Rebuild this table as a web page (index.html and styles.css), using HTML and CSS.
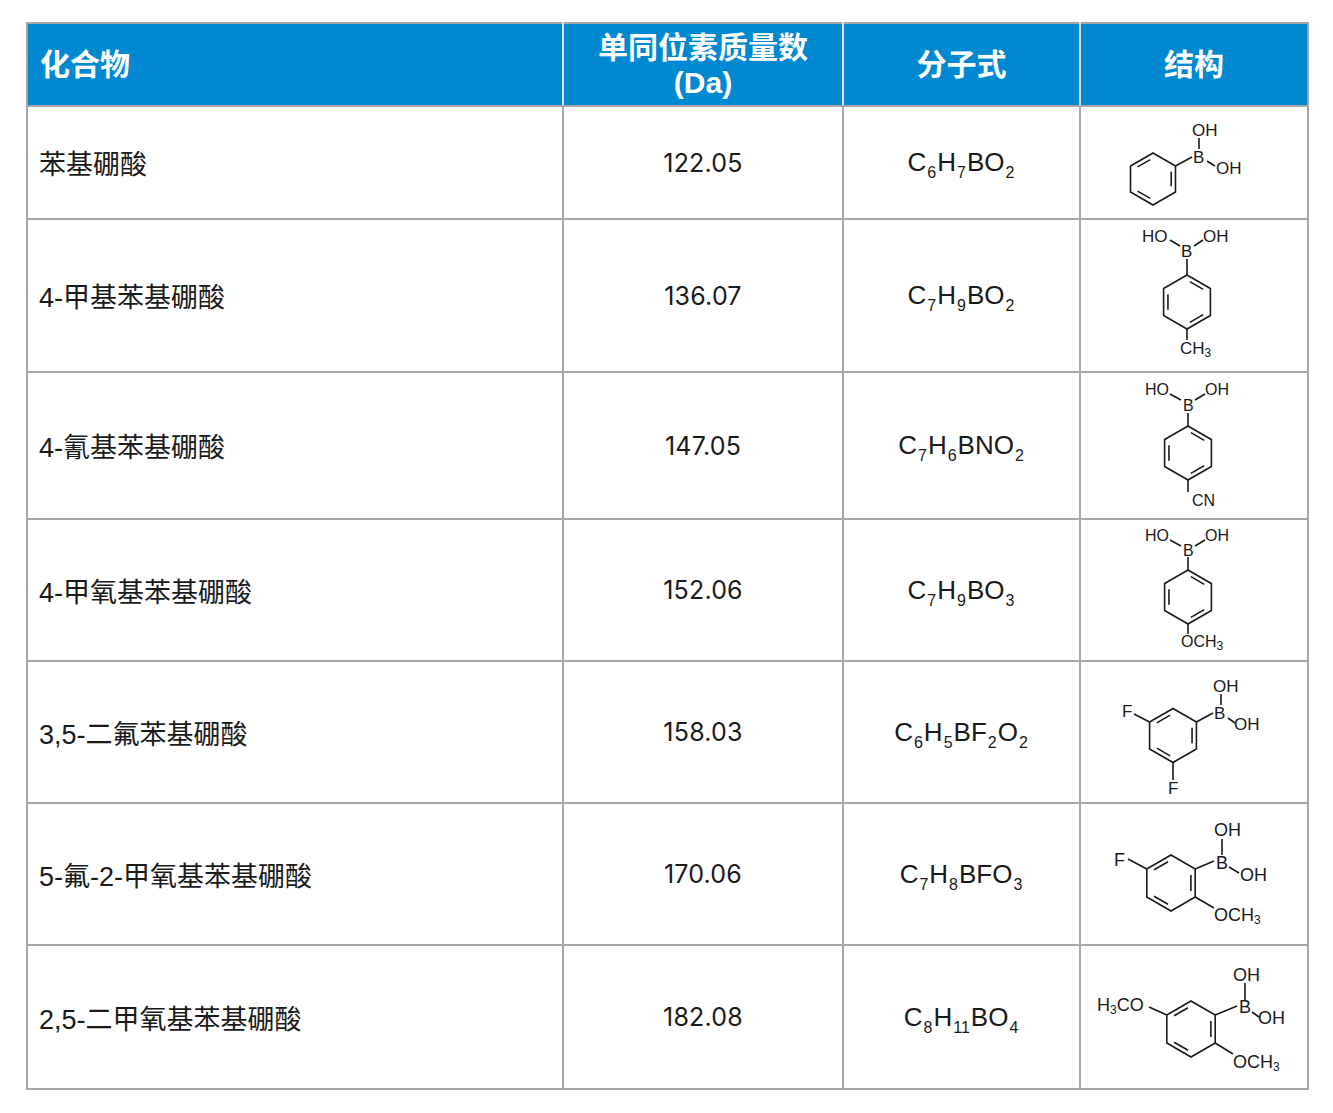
FILE: index.html
```html
<!DOCTYPE html>
<html lang="zh">
<head>
<meta charset="utf-8">
<title>硼酸化合物</title>
<link rel="stylesheet" href="styles.css">
</head>
<body>
<table class="tbl">
  <colgroup>
    <col class="c1"><col class="c2"><col class="c3"><col class="c4">
  </colgroup>
  <thead>
    <tr class="hrow">
      <th class="name">化合物</th>
      <th>单同位素质量数<br>(Da)</th>
      <th>分子式</th>
      <th>结构</th>
    </tr>
  </thead>
  <tbody>
    <tr class="r1">
      <td class="name">苯基硼酸</td>
      <td class="mass">122.05</td>
      <td class="formula">C<sub>6</sub>H<sub>7</sub>BO<sub>2</sub></td>
      <td class="struct">
        <svg class="mol" width="228" height="111" viewBox="0 1 228 111">
          <g class="bond">
            <polygon points="72,47 94.5,60 94.5,86 72,99 49.5,86 49.5,60"/>
            <line x1="69.3" y1="53.6" x2="56.5" y2="60.9"/>
            <line x1="90.2" y1="65.7" x2="90.2" y2="80.3"/>
            <line x1="56.5" y1="85.1" x2="69.3" y2="92.4"/>
            <line x1="94.5" y1="60" x2="111" y2="51"/>
            <line x1="118" y1="32" x2="118" y2="43"/>
            <line x1="126" y1="55" x2="134" y2="60"/>
          </g>
          <g class="lbl">
            <text x="111" y="30">OH</text>
            <text x="112" y="57">B</text>
            <text x="135" y="68">OH</text>
          </g>
        </svg>
      </td>
    </tr>
    <tr class="r2">
      <td class="name">4-甲基苯基硼酸</td>
      <td class="mass">136.07</td>
      <td class="formula">C<sub>7</sub>H<sub>9</sub>BO<sub>2</sub></td>
      <td class="struct">
        <svg class="mol" width="228" height="150" viewBox="0 1 228 150">
          <g class="bond">
            <polygon points="106,55 129.4,68.5 129.4,95.5 106,109 82.6,95.5 82.6,68.5"/>
            <line x1="86.95" y1="74.3" x2="86.95" y2="89.7"/>
            <line x1="108.9" y1="61.65" x2="122.2" y2="69.35"/>
            <line x1="108.9" y1="102.35" x2="122.2" y2="94.65"/>
            <line x1="106" y1="39" x2="106" y2="55"/>
            <line x1="106" y1="109" x2="106" y2="120"/>
            <line x1="89" y1="20" x2="99" y2="26"/>
            <line x1="113" y1="26" x2="122" y2="20"/>
          </g>
          <g class="lbl">
            <text x="61" y="22">HO</text>
            <text x="100" y="37">B</text>
            <text x="122" y="22">OH</text>
            <text x="99" y="134">CH<tspan class="sb" dy="3">3</tspan></text>
          </g>
        </svg>
      </td>
    </tr>
    <tr class="r3">
      <td class="name">4-氰基苯基硼酸</td>
      <td class="mass">147.05</td>
      <td class="formula">C<sub>7</sub>H<sub>6</sub>BNO<sub>2</sub></td>
      <td class="struct">
        <svg class="mol" width="228" height="144" viewBox="0 1 228 144">
          <g class="bond">
            <polygon points="107,53 130.4,66.5 130.4,93.5 107,107 83.6,93.5 83.6,66.5"/>
            <line x1="87.95" y1="72.3" x2="87.95" y2="87.7"/>
            <line x1="109.9" y1="59.65" x2="123.2" y2="67.35"/>
            <line x1="109.9" y1="100.35" x2="123.2" y2="92.65"/>
            <line x1="107" y1="40" x2="107" y2="53"/>
            <line x1="107" y1="107" x2="107" y2="119"/>
            <line x1="89" y1="21" x2="100" y2="27"/>
            <line x1="114" y1="27" x2="124" y2="21"/>
          </g>
          <g class="lbl sm">
            <text x="64" y="22">HO</text>
            <text x="102" y="38">B</text>
            <text x="124" y="22">OH</text>
            <text x="111" y="133">CN</text>
          </g>
        </svg>
      </td>
    </tr>
    <tr class="r4">
      <td class="name">4-甲氧基苯基硼酸</td>
      <td class="mass">152.06</td>
      <td class="formula">C<sub>7</sub>H<sub>9</sub>BO<sub>3</sub></td>
      <td class="struct">
        <svg class="mol" width="228" height="139" viewBox="0 1 228 139">
          <g class="bond">
            <polygon points="107,50 130.4,63.5 130.4,90.5 107,104 83.6,90.5 83.6,63.5"/>
            <line x1="87.95" y1="69.3" x2="87.95" y2="84.7"/>
            <line x1="109.9" y1="56.65" x2="123.2" y2="64.35"/>
            <line x1="109.9" y1="97.35" x2="123.2" y2="89.65"/>
            <line x1="107" y1="37" x2="107" y2="50"/>
            <line x1="107" y1="104" x2="107" y2="114"/>
            <line x1="89" y1="20" x2="100" y2="26"/>
            <line x1="114" y1="26" x2="124" y2="20"/>
          </g>
          <g class="lbl sm">
            <text x="64" y="21">HO</text>
            <text x="102" y="36">B</text>
            <text x="124" y="21">OH</text>
            <text x="100" y="127">OCH<tspan class="sb" dy="3">3</tspan></text>
          </g>
        </svg>
      </td>
    </tr>
    <tr class="r5">
      <td class="name">3,5-二氟苯基硼酸</td>
      <td class="mass">158.03</td>
      <td class="formula">C<sub>6</sub>H<sub>5</sub>BF<sub>2</sub>O<sub>2</sub></td>
      <td class="struct">
        <svg class="mol" width="228" height="139" viewBox="0 1 228 139">
          <g class="bond">
            <polygon points="92,46.5 115.4,60 115.4,87 92,100.5 68.6,87 68.6,60"/>
            <line x1="89.14" y1="53.15" x2="75.81" y2="60.85"/>
            <line x1="111.05" y1="65.8" x2="111.05" y2="81.2"/>
            <line x1="75.81" y1="86.15" x2="89.14" y2="93.85"/>
            <line x1="115.4" y1="60" x2="132" y2="51"/>
            <line x1="140" y1="32" x2="140" y2="43"/>
            <line x1="147" y1="56" x2="154" y2="61"/>
            <line x1="68.6" y1="60" x2="53" y2="52"/>
            <line x1="92" y1="100.5" x2="92" y2="118"/>
          </g>
          <g class="lbl">
            <text x="132" y="30">OH</text>
            <text x="133" y="57">B</text>
            <text x="153" y="68">OH</text>
            <text x="41" y="55">F</text>
            <text x="87" y="132">F</text>
          </g>
        </svg>
      </td>
    </tr>
    <tr class="r6">
      <td class="name">5-氟-2-甲氧基苯基硼酸</td>
      <td class="mass">170.06</td>
      <td class="formula">C<sub>7</sub>H<sub>8</sub>BFO<sub>3</sub></td>
      <td class="struct">
        <svg class="mol" width="228" height="139" viewBox="0 1 228 139">
          <g class="bond">
            <polygon points="90,51 114.2,65 114.2,93 90,107 65.8,93 65.8,65"/>
            <line x1="87.01" y1="57.73" x2="73.09" y2="65.77"/>
            <line x1="109.9" y1="70.95" x2="109.9" y2="87.05"/>
            <line x1="73.09" y1="92.23" x2="87.01" y2="100.27"/>
            <line x1="114.2" y1="65" x2="133" y2="57"/>
            <line x1="141" y1="35" x2="141" y2="51"/>
            <line x1="148" y1="63" x2="158" y2="69"/>
            <line x1="65.8" y1="65" x2="47" y2="55"/>
            <line x1="114.2" y1="93" x2="133" y2="104"/>
          </g>
          <g class="lbl lg">
            <text x="133" y="32">OH</text>
            <text x="135" y="65">B</text>
            <text x="159" y="77">OH</text>
            <text x="33" y="62">F</text>
            <text x="133" y="117">OCH<tspan class="sb" dy="3">3</tspan></text>
          </g>
        </svg>
      </td>
    </tr>
    <tr class="r7">
      <td class="name">2,5-二甲氧基苯基硼酸</td>
      <td class="mass">182.08</td>
      <td class="formula">C<sub>8</sub>H<sub>11</sub>BO<sub>4</sub></td>
      <td class="struct">
        <svg class="mol" width="228" height="141" viewBox="0 1 228 141">
          <g class="bond">
            <polygon points="110,55 134.2,69 134.2,97 110,111 85.8,97 85.8,69"/>
            <line x1="107.01" y1="61.73" x2="93.09" y2="69.77"/>
            <line x1="129.9" y1="74.95" x2="129.9" y2="91.05"/>
            <line x1="93.09" y1="96.23" x2="107.01" y2="104.27"/>
            <line x1="134.2" y1="69" x2="156" y2="60"/>
            <line x1="164" y1="37" x2="164" y2="54"/>
            <line x1="171" y1="66" x2="178" y2="71"/>
            <line x1="85.8" y1="69" x2="68" y2="61"/>
            <line x1="134.2" y1="97" x2="152" y2="108"/>
          </g>
          <g class="lbl lg">
            <text x="152" y="35">OH</text>
            <text x="158" y="67">B</text>
            <text x="177" y="78">OH</text>
            <text x="16" y="65">H<tspan class="sb" dy="3">3</tspan><tspan dy="-3">CO</tspan></text>
            <text x="152" y="122">OCH<tspan class="sb" dy="3">3</tspan></text>
          </g>
        </svg>
      </td>
    </tr>
  </tbody>
</table>
</body>
</html>
```
FILE: styles.css
```css
html, body {
  margin: 0;
  padding: 0;
  background: #ffffff;
}

body {
  font-family: "Liberation Sans", "Noto Sans CJK SC", sans-serif;
  color: #1a1a1a;
}

.tbl {
  border-collapse: collapse;
  table-layout: fixed;
  width: 1281px;
  margin: 22px 0 0 26px;
}

.c1 { width: 536px; }
.c2 { width: 280px; }
.c3 { width: 237px; }
.c4 { width: 228px; }

.tbl th,
.tbl td {
  border: 2px solid #a7a7a7;
  padding: 0;
  vertical-align: middle;
  text-align: center;
}

.tbl th {
  background: #0089d1;
  color: #ffffff;
  font-family: "Liberation Sans", "Noto Sans CJK SC", sans-serif;
  font-weight: 700;
  font-size: 30px;
  line-height: 35px;
  border-left-color: #d9e6ee;
  border-right-color: #d9e6ee;
}

.tbl th:first-child { border-left-color: #a7a7a7; }
.tbl th:last-child { border-right-color: #a7a7a7; }

.hrow { height: 83px; }
.r1 { height: 113px; }
.r2 { height: 153px; }
.r3 { height: 147px; }
.r4 { height: 142px; }
.r5 { height: 142px; }
.r6 { height: 142px; }
.r7 { height: 144px; }

.tbl .name {
  text-align: left;
  padding-left: 11px;
}

.tbl th.name {
  padding-left: 12px;
}

.tbl td.name {
  font-size: 27px;
  font-family: "Liberation Sans", "Noto Sans CJK SC", sans-serif;
}

.tbl td.mass {
  font-size: 25px;
  font-family: Inter, "Liberation Sans", sans-serif;
  letter-spacing: 0.2px;
}

.tbl td.formula {
  font-size: 26px;
  font-family: "Liberation Sans", Arial, sans-serif;
}

.formula sub {
  font-size: 16px;
  vertical-align: -7px;
  line-height: 0;
  margin: 0 1px;
}

.tbl td.struct {
  line-height: 0;
}

.mol {
  display: block;
}

.bond {
  stroke: #1a1a1a;
  stroke-width: 1.6;
  fill: none;
}

.lbl {
  font-family: "Liberation Sans", Arial, sans-serif;
  font-size: 17px;
  fill: #1a1a1a;
}

.lbl.sm { font-size: 16px; }
.lbl.lg { font-size: 18px; }

.lbl .sb { font-size: 12px; }
```
